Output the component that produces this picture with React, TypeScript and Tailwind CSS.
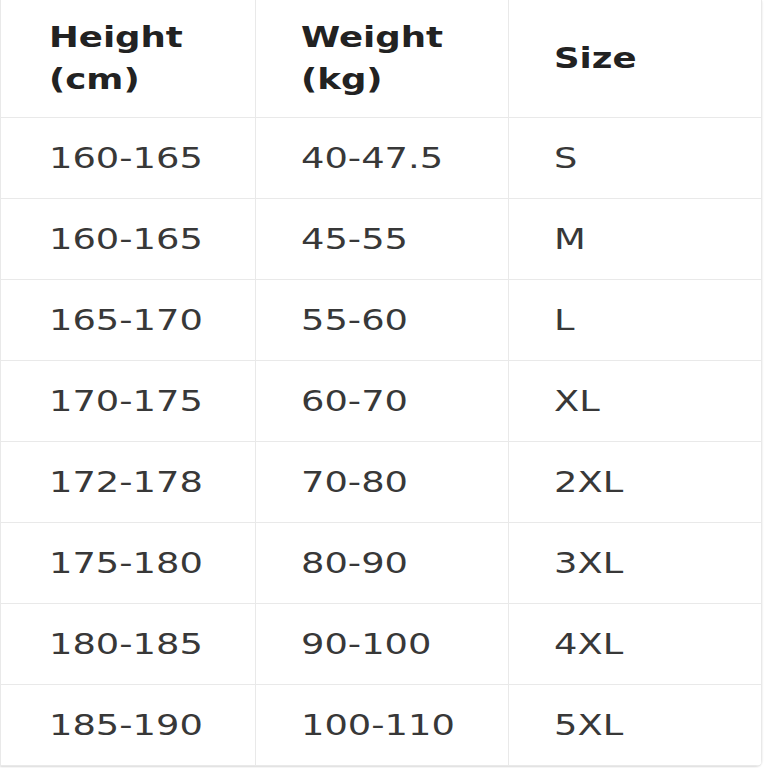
const ROWS: [string, string, string][] = [
  ["160-165", "40-47.5", "S"],
  ["160-165", "45-55", "M"],
  ["165-170", "55-60", "L"],
  ["170-175", "60-70", "XL"],
  ["172-178", "70-80", "2XL"],
  ["175-180", "80-90", "3XL"],
  ["180-185", "90-100", "4XL"],
  ["185-190", "100-110", "5XL"],
];

function Cell({ children, head, first }: { children: React.ReactNode; head?: boolean; first?: boolean }) {
  return (
    <div
      className={
        "flex items-center border-b border-r border-[#e9e9e9] " +
        (first ? "pl-[48px] " : "pl-[45px] ") +
        (head ? "h-[118px]" : "h-[81px]")
      }
    >
      <span
        className={
          "inline-block origin-left scale-x-[1.27] whitespace-pre " +
          (head ? "font-bold text-[#222222] text-[28px] leading-[42px]" : "text-[#383838] leading-none")
        }
      >
        {children}
      </span>
    </div>
  );
}

export default function App() {
  return (
    <div className="h-[768px] w-[764px] bg-white" style={{ fontFamily: '"DejaVu Sans", Verdana, sans-serif' }}>
      <div className="w-[762px] overflow-hidden rounded-br-md border-l border-[#e9e9e9] text-[29px] shadow-[0_1px_2px_rgba(0,0,0,0.15)]">
        <div className="grid grid-cols-[255px_253px_1fr]">
          <Cell head first>{"Height\n(cm)"}</Cell>
          <Cell head>{"Weight\n(kg)"}</Cell>
          <Cell head>Size</Cell>
          {ROWS.map((r, i) => (
            <div key={i} className="contents">
              <Cell first>{r[0]}</Cell>
              <Cell>{r[1]}</Cell>
              <Cell>{r[2]}</Cell>
            </div>
          ))}
        </div>
      </div>
    </div>
  );
}
